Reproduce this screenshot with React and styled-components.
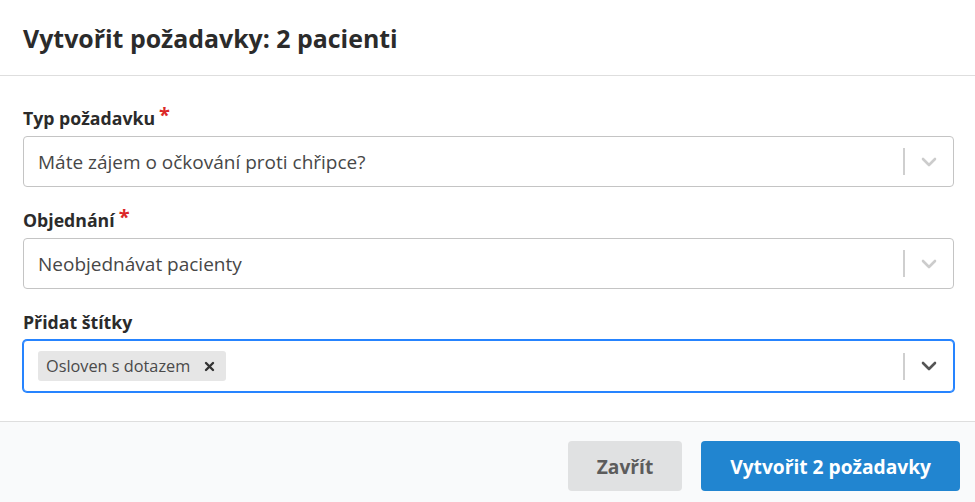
import React from "react";
import styled, { createGlobalStyle } from "styled-components";

const GlobalStyle = createGlobalStyle`
  html, body {
    margin: 0;
    padding: 0;
    background: #fff;
  }
  body {
    font-family: "Open Sans", "Noto Sans", sans-serif;
    color: #333;
  }
  * {
    box-sizing: border-box;
  }
`;

const Modal = styled.div`
  width: 975px;
  height: 502px;
  display: flex;
  flex-direction: column;
  background: #fff;
`;

const Header = styled.div`
  height: 76px;
  display: flex;
  align-items: center;
  padding: 0 23px;
  border-bottom: 1px solid #dedede;
`;

const Title = styled.h1`
  margin: 0;
  font-size: 24.9px;
  font-weight: 700;
  color: #2b2b2b;
`;

const Body = styled.div`
  padding: 32px 21px 29px 23px;
  display: flex;
  flex-direction: column;
`;

const Field = styled.div`
  display: flex;
  flex-direction: column;
  gap: 8px;
  & + & {
    margin-top: 23px;
  }
`;

const Label = styled.label`
  font-size: 17.7px;
  line-height: 20px;
  font-weight: 700;
  color: #2b2b2b;
`;

const Required = styled.span`
  color: #db2828;
  font-size: 20px;
  margin-left: 4px;
  vertical-align: top;
  line-height: 14px;
`;

const Control = styled.div`
  height: ${(p) => (p.$focused ? "52px" : "51px")};
  display: flex;
  align-items: center;
  border: 1px solid ${(p) => (p.$focused ? "#2684ff" : "#c4c4c4")};
  box-shadow: ${(p) => (p.$focused ? "0 0 0 1px #2684ff" : "none")};
  border-radius: 4px;
  background: #fff;
`;

const ValueArea = styled.div`
  flex: 1;
  display: flex;
  align-items: center;
  padding: 0 14px;
  font-size: 19px;
  color: #474747;
`;

const TagArea = styled.div`
  flex: 1;
  display: flex;
  align-items: center;
  padding: 0 14px;
`;

const Tag = styled.div`
  height: 30px;
  display: flex;
  align-items: center;
  background: #e6e6e6;
  border-radius: 3px;
  padding-left: 8px;
  font-size: 16.3px;
  color: #4a4a4a;
`;

const TagRemove = styled.span`
  display: flex;
  align-items: center;
  padding: 0 11px 0 14px;
  color: #333;
`;

const Separator = styled.span`
  width: 2px;
  height: 27px;
  background: #cfcfcf;
`;

const Indicator = styled.div`
  width: 48px;
  display: flex;
  align-items: center;
  justify-content: center;
  color: ${(p) => (p.$focused ? "#555" : "#cccccc")};
`;

const Footer = styled.div`
  flex: 1;
  display: flex;
  justify-content: flex-end;
  align-items: flex-start;
  gap: 19px;
  padding: 19px 15px 0;
  background: #f9fafb;
  border-top: 1px solid #dedede;
`;

const Button = styled.button`
  height: 50px;
  padding: 0 29px;
  border: none;
  border-radius: 4px;
  font-family: "Open Sans", "Noto Sans", sans-serif;
  font-size: 19.2px;
  font-weight: 700;
  cursor: pointer;
  background: ${(p) => (p.$primary ? "#2185d0" : "#e0e1e2")};
  color: ${(p) => (p.$primary ? "#fff" : "#5c5c5c")};
`;

const Chevron = () => (
  <svg width="16" height="10" viewBox="0 0 16 10">
    <polyline
      points="2,2 8,8 14,2"
      fill="none"
      stroke="currentColor"
      strokeWidth="2.6"
      strokeLinecap="round"
      strokeLinejoin="round"
    />
  </svg>
);

const Cross = () => (
  <svg width="11" height="11" viewBox="0 0 11 11">
    <path
      d="M2 2 L9 9 M9 2 L2 9"
      stroke="currentColor"
      strokeWidth="2.4"
      strokeLinecap="round"
    />
  </svg>
);

const Select = ({ value, focused, children }) => (
  <Control $focused={focused}>
    {children || <ValueArea>{value}</ValueArea>}
    <Separator />
    <Indicator $focused={focused}>
      <Chevron />
    </Indicator>
  </Control>
);

const App = () => {
  return (
    <>
      <GlobalStyle />
      <Modal>
        <Header>
          <Title>Vytvořit požadavky: 2 pacienti</Title>
        </Header>
        <Body>
          <Field>
            <Label>
              Typ požadavku<Required>*</Required>
            </Label>
            <Select value="Máte zájem o očkování proti chřipce?" />
          </Field>
          <Field>
            <Label>
              Objednání<Required>*</Required>
            </Label>
            <Select value="Neobjednávat pacienty" />
          </Field>
          <Field>
            <Label>Přidat štítky</Label>
            <Select focused>
              <TagArea>
                <Tag>
                  Osloven s dotazem
                  <TagRemove>
                    <Cross />
                  </TagRemove>
                </Tag>
              </TagArea>
            </Select>
          </Field>
        </Body>
        <Footer>
          <Button>Zavřít</Button>
          <Button $primary>Vytvořit 2 požadavky</Button>
        </Footer>
      </Modal>
    </>
  );
};

export default App;
